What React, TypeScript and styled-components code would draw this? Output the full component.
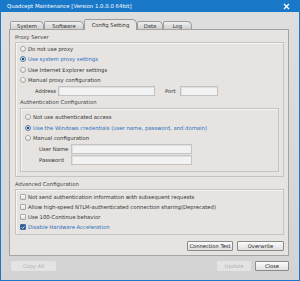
import styled, { createGlobalStyle } from "styled-components";

const GlobalStyle = createGlobalStyle`
  html, body { margin: 0; padding: 0; }
  body {
    width: 300px;
    height: 281px;
    overflow: hidden;
    font-family: "DejaVu Sans", "Liberation Sans", sans-serif;
  }
`;

const Window = styled.div`
  width: 300px;
  height: 281px;
  box-sizing: border-box;
  display: flex;
  flex-direction: column;
  background: #1a78c8;
  padding: 0 1px 1px 1px;
`;

const TitleBar = styled.div`
  height: 12px;
  flex: none;
  display: flex;
  align-items: center;
  justify-content: space-between;
  padding: 0 9px 0 6px;
  color: #ffffff;
  font-size: 5.4px;
`;

const Body = styled.div`
  flex: 1;
  display: flex;
  flex-direction: column;
  background: linear-gradient(#dedede, #d3d3d3);
  padding: 7px 10px 0 8px;
`;

const TabStrip = styled.div`
  display: flex;
  align-items: flex-end;
  height: 10px;
  padding-left: 1px;
`;

const Tab = styled.div<{ $w: number; $active?: boolean }>`
  width: ${(p) => p.$w}px;
  height: ${(p) => (p.$active ? 11 : 8)}px;
  box-sizing: border-box;
  margin-bottom: ${(p) => (p.$active ? -1 : 0)}px;
  display: flex;
  align-items: center;
  justify-content: center;
  font-size: 5.3px;
  color: #333;
  border: 1px solid #9c9c9c;
  border-bottom: none;
  border-radius: 2px 5px 0 0;
  background: ${(p) =>
    p.$active ? "#e6e3e1" : "linear-gradient(#f0f0f0, #cfcfcf)"};
  position: relative;
  z-index: ${(p) => (p.$active ? 2 : 1)};
`;

const Panel = styled.div`
  width: 280px;
  height: 227px;
  box-sizing: border-box;
  border: 1px solid #a3a3a3;
  background: #e6e3e1;
  padding: 2px 4px 0 5px;
  display: flex;
  flex-direction: column;
`;

const GroupLabel = styled.div<{ $h?: number; $top?: number }>`
  font-size: 5.3px;
  color: #444;
  flex: none;
  height: ${(p) => p.$h ?? 10}px;
  line-height: ${(p) => p.$h ?? 10}px;
  margin-top: ${(p) => p.$top ?? 0}px;
`;

const GroupBox = styled.div<{ $h: number; $pt?: number }>`
  height: ${(p) => p.$h}px;
  flex: none;
  box-sizing: border-box;
  border: 1px solid #c6c3c1;
  box-shadow: inset 1px 1px 0 #f6f5f4;
  padding: ${(p) => p.$pt ?? 2}px 4px 0 4px;
  display: flex;
  flex-direction: column;
`;

const Row = styled.div<{ $h?: number; $indent?: number }>`
  height: ${(p) => p.$h ?? 10}px;
  flex: none;
  display: flex;
  align-items: center;
  padding-left: ${(p) => p.$indent ?? 0}px;
  font-size: 5.3px;
`;

const Radio = styled.span<{ $on?: boolean }>`
  width: 6px;
  height: 6px;
  box-sizing: border-box;
  border-radius: 50%;
  border: 1px solid ${(p) => (p.$on ? "#5a7fa6" : "#a8a8a8")};
  background: ${(p) =>
    p.$on
      ? "radial-gradient(circle, #1d4f86 0 1.4px, #dfe9f4 1.6px)"
      : "linear-gradient(#ffffff, #dcdcdc)"};
  margin-right: 2px;
  flex: none;
`;

const Check = styled.span<{ $on?: boolean }>`
  width: 6px;
  height: 6px;
  box-sizing: border-box;
  border: 1px solid ${(p) => (p.$on ? "#3d6c9f" : "#a8a8a8")};
  border-radius: 1px;
  background: ${(p) => (p.$on ? "#2c5f96" : "linear-gradient(#ffffff, #dcdcdc)")};
  margin-right: 2px;
  flex: none;
  display: flex;
  align-items: center;
  justify-content: center;
`;

const Text = styled.span<{ $on?: boolean }>`
  color: ${(p) => (p.$on ? "#2a71bd" : "#333")};
  white-space: nowrap;
`;

const FieldLabel = styled.span<{ $w: number; $gap?: number }>`
  width: ${(p) => p.$w}px;
  margin-left: ${(p) => p.$gap ?? 0}px;
  flex: none;
  color: #333;
  white-space: nowrap;
`;

const Input = styled.span<{ $w: number }>`
  width: ${(p) => p.$w}px;
  height: 10px;
  box-sizing: border-box;
  flex: none;
  border: 1px solid #c3c3c3;
  background: #f2f2f2;
  box-shadow: inset 1px 1px 0 #e0e0e0;
`;

const ButtonRow = styled.div<{ $pad?: string }>`
  display: flex;
  align-items: center;
  gap: 4px;
  padding: ${(p) => p.$pad ?? "0"};
`;

const Button = styled.div<{ $w: number; $disabled?: boolean }>`
  width: ${(p) => p.$w}px;
  height: 10px;
  box-sizing: border-box;
  display: flex;
  align-items: center;
  justify-content: center;
  font-size: 5.2px;
  color: ${(p) => (p.$disabled ? "#b0b0b0" : "#222")};
  border: 1px solid ${(p) => (p.$disabled ? "#e2e2e2" : "#8a8a8a")};
  border-radius: 1px;
  background: ${(p) =>
    p.$disabled ? "#e4e4e4" : "linear-gradient(#fbfbfb, #dedede)"};
`;

const Spacer = styled.div`
  flex: 1;
`;

const CloseIcon = () => (
  <svg width="7" height="7" viewBox="0 0 7 7">
    <path d="M1 1L6 6M6 1L1 6" stroke="#ffffff" strokeWidth="1.3" />
  </svg>
);

const Tick = () => (
  <svg width="5" height="5" viewBox="0 0 5 5">
    <path d="M0.8 2.5L2 3.8L4.2 1" stroke="#ffffff" strokeWidth="1" fill="none" />
  </svg>
);

const App = () => {
  return (
    <>
      <GlobalStyle />
      <Window>
        <TitleBar>
          <span>Quadcept Maintenance [Version 1.0.0.0 64bit]</span>
          <CloseIcon />
        </TitleBar>
        <Body>
          <TabStrip>
            <Tab $w={34}>System</Tab>
            <Tab $w={40}>Software</Tab>
            <Tab $w={53} $active>
              Config Setting
            </Tab>
            <Tab $w={26}>Data</Tab>
            <Tab $w={29}>Log</Tab>
          </TabStrip>
          <Panel>
            <GroupLabel>Proxy Server</GroupLabel>
            <GroupBox $h={135} $pt={1}>
              <Row $h={10.3}>
                <Radio />
                <Text>Do not use proxy</Text>
              </Row>
              <Row $h={10.3}>
                <Radio $on />
                <Text $on>Use system proxy settings</Text>
              </Row>
              <Row $h={10.3}>
                <Radio />
                <Text>Use Internet Explorer settings</Text>
              </Row>
              <Row $h={10.3}>
                <Radio />
                <Text>Manual proxy configuration</Text>
              </Row>
              <Row $h={12} $indent={15}>
                <FieldLabel $w={23}>Address</FieldLabel>
                <Input $w={97} />
                <FieldLabel $w={15} $gap={10}>
                  Port
                </FieldLabel>
                <Input $w={38} />
              </Row>
              <GroupLabel $h={11}>Authentication Configuration</GroupLabel>
              <GroupBox $h={64} $pt={3}>
                <Row $h={10.5}>
                  <Radio />
                  <Text>Not use authenticated access</Text>
                </Row>
                <Row $h={10.5}>
                  <Radio $on />
                  <Text $on>
                    Use the Windows credentials (user name, password, and domain)
                  </Text>
                </Row>
                <Row $h={10.5}>
                  <Radio />
                  <Text>Manual configuration</Text>
                </Row>
                <Row $h={11} $indent={14}>
                  <FieldLabel $w={32}>User Name</FieldLabel>
                  <Input $w={121} />
                </Row>
                <Row $h={11} $indent={14}>
                  <FieldLabel $w={32}>Password</FieldLabel>
                  <Input $w={121} />
                </Row>
              </GroupBox>
            </GroupBox>
            <GroupLabel $top={2}>Advanced Configuration</GroupLabel>
            <GroupBox $h={46}>
              <Row>
                <Check />
                <Text>Not send authentication information with subsequent requests</Text>
              </Row>
              <Row>
                <Check />
                <Text>Allow high-speed NTLM-authenticated connection sharing(Deprecated)</Text>
              </Row>
              <Row>
                <Check />
                <Text>Use 100-Continue behavior</Text>
              </Row>
              <Row>
                <Check $on>
                  <Tick />
                </Check>
                <Text $on>Disable Hardware Acceleration</Text>
              </Row>
            </GroupBox>
            <ButtonRow $pad="6px 0 0 172px">
              <Button $w={46}>Connection Test</Button>
              <Button $w={47}>Overwrite</Button>
            </ButtonRow>
          </Panel>
          <ButtonRow $pad="5px 0 0 2px">
            <Button $w={45} $disabled>
              Copy All
            </Button>
            <Spacer />
            <Button $w={34} $disabled>
              Update
            </Button>
            <Button $w={34}>Close</Button>
          </ButtonRow>
        </Body>
      </Window>
    </>
  );
};

export default App;
